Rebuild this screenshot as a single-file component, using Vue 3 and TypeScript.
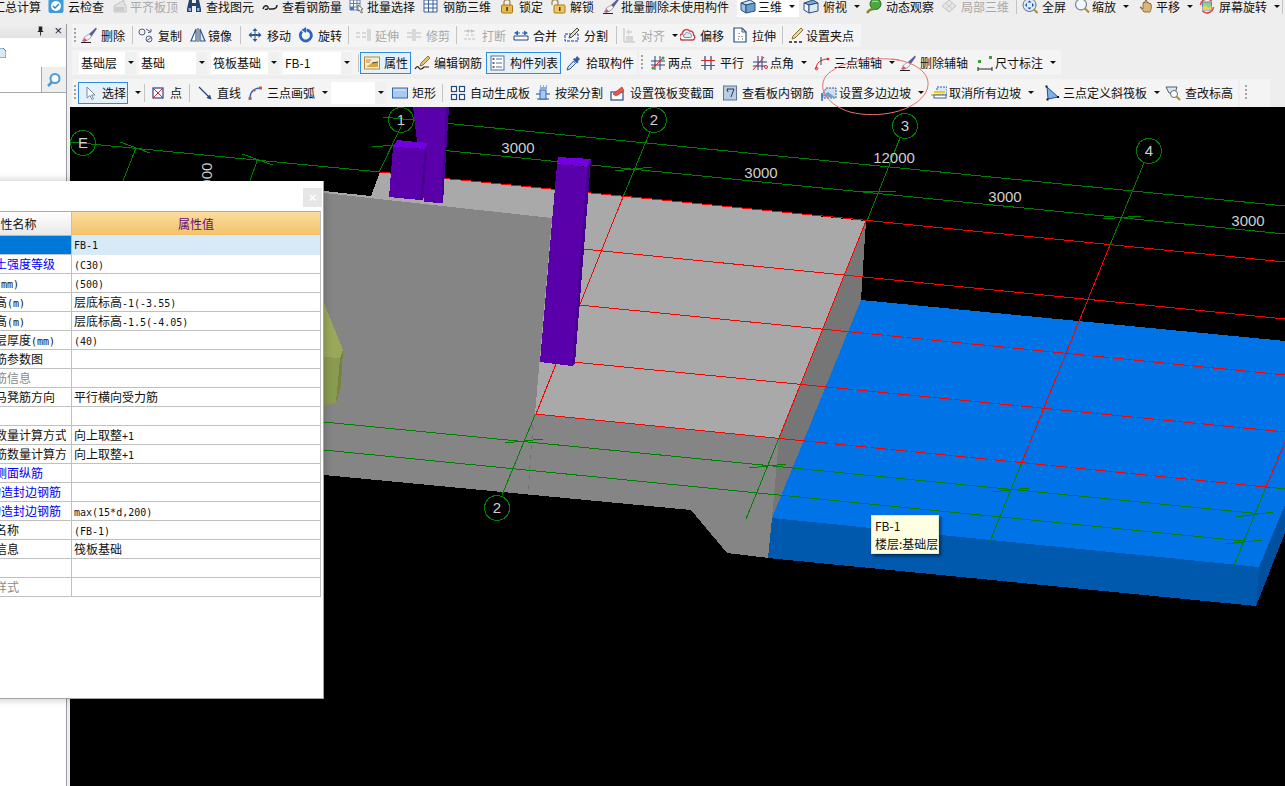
<template>
  <div class="app">
    <div class="row row1">
      <ToolItem v-for="(it, i) in row1" :key="i" :it="it" />
    </div>

    <div class="body">
      <aside class="side">
        <div class="panel">
          <div class="panel-head">
            <svg class="pin" viewBox="0 0 10 10"><path d="M3 0h4v5h1v1H5.500v4h-1V6H2V5h1z" fill="#222" /></svg>
            <span class="panel-x">×</span>
          </div>
          <div class="panel-tools">
            <svg class="doc" viewBox="0 0 6 10"><path d="M-5 0h8l3 3v7H-5z" fill="#dbe8f6" stroke="#4d7fb5" /></svg>
          </div>
          <div class="search">
            <div class="search-input"></div>
            <div class="search-btn">
              <svg viewBox="0 0 16 16" width="16" height="16"><circle cx="9" cy="6.500" r="4.500" fill="#fff" stroke="#4a9bd8" stroke-width="2" /><path d="M6 10l-4 4" stroke="#4a9bd8" stroke-width="2.500" /></svg>
            </div>
          </div>
        </div>
      </aside>

      <div class="work">
        <div class="row row2">
          <div class="group">
            <ToolItem v-for="(it, i) in row2" :key="i" :it="it" />
          </div>
        </div>
        <div class="row row3">
          <div class="group">
            <ToolItem v-for="(it, i) in row3a" :key="i" :it="it" />
          </div>
          <div class="group">
            <ToolItem v-for="(it, i) in row3b" :key="i" :it="it" />
          </div>
        </div>
        <div class="row row4">
          <div class="group">
            <ToolItem v-for="(it, i) in row4" :key="i" :it="it" />
          </div>
          <div class="group endcap"><i class="grip"></i></div>
        </div>

        <div class="canvas">
          <svg class="scene" viewBox="70 107 1215 679" width="1215" height="679" shape-rendering="crispEdges">
            <polygon v-for="(p, i) in faces" :key="'f' + i" :points="p.pts" :fill="p.fill" />
            <line v-for="(l, i) in redLines" :key="'r' + i" :x1="l[0]" :y1="l[1]" :x2="l[2]" :y2="l[3]" stroke="#ff0000" />
            <line x1="533" y1="425" x2="528" y2="493" stroke="#6e6e6e" stroke-dasharray="4 6" />
            <line v-for="(l, i) in greenLines" :key="'g' + i" :x1="l[0]" :y1="l[1]" :x2="l[2]" :y2="l[3]" stroke="#008000" />
            <polygon v-for="(p, i) in columns" :key="'c' + i" :points="p.pts" :fill="p.fill" />
            <circle v-for="a in axes" :key="a.x + a.t" :cx="a.x" :cy="a.y" r="12.500" fill="none" stroke="#008000" />
            <g class="dim" shape-rendering="auto">
              <text v-for="a in axes" :key="'t' + a.x" :x="a.x" :y="a.y + 5" text-anchor="middle">{{ a.t }}</text>
              <text v-for="d in dims" :key="d.x" :x="d.x" :y="d.y" text-anchor="middle">{{ d.t }}</text>
              <text transform="translate(212 196) rotate(-90)">3000</text>
            </g>
          </svg>
        </div>
      </div>
    </div>

    <section class="prop">
      <div class="prop-title"><span class="prop-close">×</span></div>
      <div class="prop-table">
        <div class="prop-head">
          <div class="h-name">属性名称</div>
          <div class="h-val">属性值</div>
        </div>
        <div v-for="(r, i) in rows" :key="i" class="prop-row" :class="{ sel: i === 0 }">
          <div class="c-name" :class="r.tone">
            <div class="c-clip">
              <template v-for="(s, j) in split(r.name)" :key="j"><span :class="{ lat: s.lat }">{{ s.text }}</span></template>
            </div>
          </div>
          <div class="c-val">
            <template v-for="(s, j) in split(r.value)" :key="j"><span :class="{ lat: s.lat }">{{ s.text }}</span></template>
          </div>
        </div>
      </div>
    </section>

    <div class="tip">
      <div>FB-1</div>
      <div>楼层:基础层</div>
    </div>

    <svg class="mark" viewBox="0 0 1285 786" width="1285" height="786">
      <path d="M899 60C870 56 838 62 826 76C816 90 830 106 850 112C878 119 915 112 926 92C934 76 918 62 892 59" fill="none" stroke="#e8706e" stroke-width="1" />
    </svg>
  </div>
</template>

<script setup lang="ts">
import { defineComponent, h } from 'vue'

interface Tool {
  w: number
  kind?: 'sep' | 'grip' | 'sel' | 'pad'
  icon?: string
  label?: string
  caret?: boolean
  off?: boolean
  box?: number
  white?: boolean
  inner?: number
  tight?: boolean
}

const icons: Record<string, string> = {
  cloud: '<rect x="0.500" y="1" width="15" height="14" rx="2" fill="#3d9bdc"/><circle cx="8" cy="8" r="5" fill="#fff"/><path d="M5 8l2 2 4-4" stroke="#2f86c8" stroke-width="1.500" fill="none"/>',
  flush: '<path d="M2 14V8l5-3 5-3v4l2 1v7z" fill="#e2e2e2" stroke="#c4c4c4"/><path d="M3 10h9M3 12h9" stroke="#b4b4b4"/>',
  find: '<path d="M3 2h3v3h4V2h3l2 9v3H10V8H6v6H1v-3z" fill="#27406e"/><rect x="2.500" y="10" width="2.500" height="3" fill="#8cb0e0"/><rect x="11" y="10" width="2.500" height="3" fill="#8cb0e0"/>',
  rebar: '<path d="M1 11c1-4 4-4 5-2s-2 3-3 2M7 11h3c3 0 5-1 5-4" stroke="#222" stroke-width="1.500" fill="none"/>',
  batch: '<path d="M1 2h10v10H1zM1 5.500h10M1 9h10M4.500 2v10M8 2v10" fill="#fff" stroke="#5f7fa8"/><rect x="1" y="9" width="3.500" height="3" fill="#3f78c8"/><path d="M9 7l5 4-2 .5 1.500 3-1.500.5-1.500-3L9 13z" fill="#fff" stroke="#444" stroke-width=".7"/>',
  rebar3d: '<path d="M1 2h13v12H1zM1 6h13M1 10h13M5.500 2v12M10 2v12" fill="#fff" stroke="#3b5f96"/>',
  lock: '<path d="M5 7V4.500a3 3 0 0 1 6 0V7" fill="none" stroke="#9c8a5c" stroke-width="1.300"/><rect x="2.500" y="7" width="11" height="8" rx="1" fill="#e9b94c" stroke="#a87c1c"/><rect x="7.300" y="9" width="1.500" height="4" fill="#4b3a12"/>',
  unlock: '<path d="M2 7V4.500a3 3 0 0 1 6 0V7" fill="none" stroke="#9c8a5c" stroke-width="1.300"/><rect x="4" y="7" width="11" height="8" rx="1" fill="#f0c55a" stroke="#a87c1c"/><rect x="9" y="9" width="1.500" height="4" fill="#4b3a12"/>',
  brush: '<path d="M15 .5L8 7l2.500 2.500L15.800 2z" fill="#5a5f9a"/><path d="M8 7L3.500 10l-2 4 2 .5 5-2.500 2-3z" fill="#f2f2f2" stroke="#777" stroke-width=".6"/><path d="M1.500 14l2-3 3 2.500-3 1z" fill="#d9508f"/><path d="M0 15.500h10" stroke="#222"/>',
  cube: '<path d="M1 5l9-3 5 3-9 2z" fill="#cfe3f4" stroke="#2f4f78"/><path d="M1 5l5 2v8l-5-3z" fill="#9cc2e6" stroke="#2f4f78"/><path d="M6 7l9-2v8l-9 2z" fill="#6d9fd0" stroke="#2f4f78"/>',
  cubetop: '<path d="M1 5l9-3 5 3-9 2z" fill="#7fa9d4" stroke="#2f4f78"/><path d="M1 5l5 2v8l-5-3z" fill="#eef4fa" stroke="#2f4f78"/><path d="M6 7l9-2v8l-9 2z" fill="#dce9f5" stroke="#2f4f78"/>',
  orbit: '<circle cx="9.500" cy="6" r="5.500" fill="#4ba640" stroke="#2c6e28"/><path d="M1 15c2-3 4-4 7-4" stroke="#7d8a3a" stroke-width="2.500" fill="none"/><path d="M6 4c2-1 3-1 6 0" stroke="#b9e6a0" fill="none"/>',
  local: '<path d="M1 8l7-6 7 6-7 6z" fill="#e4e4e4" stroke="#c6c6c6"/><path d="M4.500 5l7 6M11.500 5l-7 6" stroke="#cdcdcd"/>',
  full: '<circle cx="7.500" cy="7" r="6.500" fill="#dbe9f8" stroke="#5a6f92"/><path d="M7.500 2.500l2 2h-4zM7.500 11.500l2-2h-4zM3 7l2-2v4zM12 7l-2-2v4z" fill="#27509a"/><path d="M12 11.500l3.500 3.500" stroke="#b98a2a" stroke-width="2"/>',
  zoom: '<circle cx="7" cy="6.500" r="5.500" fill="#f2f7fc" stroke="#7b8aa0" stroke-width="1.300"/><path d="M11 10.500l4 4" stroke="#b98a2a" stroke-width="2.200"/>',
  hand: '<path d="M2 9c2 0 2 1 3 2V5l1-1 1 1V3l1-1 1 1v2l1-1 1 1v1l1-1 1 1c1 3 0 6-1 8H6c-1-2-3-3-4-5z" fill="#d9b679" stroke="#7a5c2a" stroke-width=".8"/>',
  rotscreen: '<rect x="3.500" y="4" width="9" height="8" fill="#8ed08e" stroke="#5a87b5"/><path d="M3.500 9l3-2 3 3 3-2v4h-9z" fill="#f2d14a"/><path d="M1.500 7a6.500 6.500 0 0 1 11-4M14.500 9a6.500 6.500 0 0 1-11 4" stroke="#e23d3d" stroke-width="1.500" fill="none"/>',
  copy: '<circle cx="4" cy="5" r="3" fill="#eef3f8" stroke="#53627a"/><circle cx="11" cy="12" r="3" fill="#eef3f8" stroke="#53627a"/><path d="M8 2l5 3M13 5v-3M13 5l-3 .5" stroke="#53627a" fill="none"/><path d="M9 13.500l4-3" stroke="#53627a"/>',
  mirror: '<path d="M6 2v12H1z" fill="#fff" stroke="#2f5b9a" stroke-width="1.200"/><path d="M10 2v12h5z" fill="#dfe9f5" stroke="#2f5b9a" stroke-width="1.200"/><path d="M8 1v14" stroke="#444"/>',
  move: '<path d="M8 1l2.500 3h-2v3h3V5l3 3-3 3V9h-3v3h2L8 15l-2.500-3h2V9h-3v2l-3-3 3-3v2h3V4h-2z" fill="#2f5b8f"/>',
  rotate: '<path d="M4 4.500a5.500 5.500 0 1 0 4.500-1.500" fill="none" stroke="#2b63c4" stroke-width="2.800"/><path d="M8 0v6L3.500 3z" fill="#2b63c4"/>',
  extend: '<path d="M1 6h4M1 10h4M7 6h4M7 10h4M13 2v12M15 2v12" stroke="#bdbdbd" fill="none"/>',
  trim: '<path d="M1 6h5M1 10h5M10 6h5M10 10h5M7 2v12M9 2v12" stroke="#bdbdbd" fill="none"/>',
  brk: '<path d="M2 4h12M2 12h12M4 8h3M9 8h3" stroke="#c2c2c2" stroke-dasharray="3 1" fill="none"/><path d="M7 6l-3-2 3-2zM9 6l3-2-3-2z" fill="#c2c2c2"/>',
  merge: '<path d="M1 9h14v4H1z" fill="#fff" stroke="#20497e"/><path d="M1 6l4-2.500v5zM15 6l-4-2.500v5z" fill="#2b63c4"/><path d="M5 6h2M9 6h2" stroke="#2b63c4"/>',
  split: '<rect x="1" y="7" width="13" height="7" fill="none" stroke="#1433d6" stroke-dasharray="3 1"/><path d="M13 1l2 2-7 7-3 1 1-3z" fill="#e5dcc6" stroke="#444"/>',
  align: '<path d="M1 1v14h11" fill="none" stroke="#bdbdbd"/><path d="M3 5l3-3v2h3v2H6v2zM3 9h7v5H3z" fill="#d6d6d6"/>',
  offset: '<path d="M3 13a3 3 0 0 1-.5-6 4 4 0 0 1 7-3 3.500 3.500 0 0 1 4 4 2.800 2.800 0 0 1-.5 5z" fill="#fff" stroke="#c64a4a" stroke-width="1.500"/><path d="M5 10.500a1.500 1.500 0 0 1 0-3 2 2 0 0 1 3.500-1.500c2-.5 3 1 2.500 2 1 0 1 2.500-.5 2.500z" fill="#dfe7f2" stroke="#7a8fa8"/>',
  stretch: '<path d="M2 1h8l4 4v10H2z" fill="#fff" stroke="#1f4e86" stroke-width="1.200"/><path d="M10 1v4h4M7 6v1M7 9v1M10 9v1M10 12h1M6 12h1" stroke="#555" fill="none"/>',
  grips: '<path d="M1 15h3M6 15h3M11 15h3" stroke="#222" stroke-width="1.300"/><path d="M13 1l2 2-8 8-3 1 1-3z" fill="#e8d9a8" stroke="#8a6d2a"/>',
  attr: '<rect x="0.500" y="2" width="15" height="12" fill="#f8eccf" stroke="#b08c3c"/><path d="M2 5h5M2 7h4" stroke="#c9843a"/><path d="M2 12l6-4 6-1v5z" fill="#d8a63f"/><path d="M8 8l6-1" stroke="#444"/>',
  edit: '<path d="M1 14c2-3 3-3 4-1s3 1 5-1h5" fill="none" stroke="#222" stroke-width="1.200"/><path d="M14 1l2 2-7 7-3 1 1-3z" fill="#f0c060" stroke="#7a5c2a" stroke-width=".8"/>',
  list: '<rect x="1" y="1" width="13" height="14" fill="#fff" stroke="#58708f"/><path d="M6 4h6M6 8h6M6 12h6" stroke="#58708f"/><rect x="2.500" y="3" width="2" height="2" fill="#58708f"/><rect x="2.500" y="7" width="2" height="2" fill="#58708f"/><rect x="2.500" y="11" width="2" height="2" fill="#58708f"/>',
  dropper: '<path d="M11 1l3 3-2 2 .5 1-1.500 1.500L7 4.500 8.500 3l1 .5z" fill="#2f5b9a"/><path d="M7.500 6L2 12l-1 3 3-1 5.500-5.500z" fill="#cfe3f5" stroke="#2f5b9a"/>',
  twopt: '<path d="M5 1v14M10 1v14M1 6h14M1 10h14" stroke="#2d3f7a" fill="none"/><path d="M2 14L14 2" stroke="#d22"/><circle cx="3" cy="13" r="1.500" fill="#3a9a3a"/><circle cx="13" cy="3" r="1.500" fill="#3a9a3a"/>',
  parallel: '<path d="M5 1v14M11 1v14" stroke="#2d3f7a" fill="none" stroke-width="1.200"/><path d="M1 5.500h14M1 10.500h14" stroke="#d22" stroke-width="1.200"/>',
  angle: '<path d="M6 1v14M10 1v14M1 7h14M1 11h12" stroke="#2d3f7a" fill="none"/><path d="M1 15L12 2" stroke="#d22"/><circle cx="14" cy="12" r="1.500" fill="none" stroke="#d22"/>',
  arc3: '<path d="M2 14c0-6 5-10 12-10" fill="none" stroke="#d22"/><path d="M7 2v8" stroke="#2d3f7a"/><circle cx="2.500" cy="13.500" r="1.300" fill="none" stroke="#d22"/><circle cx="14" cy="4" r="1.300" fill="#d22"/>',
  dim: '<path d="M1 14h14M1 12v4M15 12v4" stroke="#222" fill="none"/><rect x="1" y="5" width="3" height="3" fill="#3aa03a"/><rect x="12" y="1" width="3" height="3" fill="#3aa03a"/>',
  cursor: '<path d="M5 2v11l3-2.500 2 4 1.500-.8-2-3.700h3.500z" fill="#fff" stroke="#7b8aa5"/>',
  pointx: '<rect x="3" y="3" width="10" height="10" fill="#fff" stroke="#2d3f8a" stroke-width="1.200"/><path d="M4 4l8 8M12 4l-8 8" stroke="#d22"/>',
  line: '<path d="M2 2l11 11" stroke="#20497e" stroke-width="1.300"/><path d="M14.500 14.500l-5-1.500 3.500-3.500z" fill="#20497e"/>',
  arc: '<path d="M3 13c0-6 4-10 10-10" fill="none" stroke="#2b63c4" stroke-width="1.300"/><rect x="1.500" y="12" width="3" height="3" fill="#d2553f"/><rect x="6" y="4" width="2.500" height="2.500" fill="#d2553f"/><rect x="12" y="1.500" width="3" height="3" fill="#d2553f"/>',
  rect: '<rect x="0.500" y="3" width="15" height="10" fill="#a9c9ee" stroke="#3468b0"/><path d="M2 5h12" stroke="#dfeaf8"/>',
  auto: '<g fill="#fff" stroke="#20497e" stroke-width="1.200"><rect x="1.500" y="1.500" width="5" height="5"/><rect x="9.500" y="1.500" width="5" height="5"/><rect x="1.500" y="9.500" width="5" height="5"/><rect x="9.500" y="9.500" width="5" height="5"/></g>',
  beam: '<path d="M1 9h14M2 14h12" stroke="#20497e"/><rect x="5" y="5" width="6" height="9" fill="#a9c9ee" stroke="#2b63c4"/><path d="M5 1h1M8 1h1M11 1h1M5 3h7" stroke="#2b63c4"/>',
  slope: '<rect x="1" y="7" width="12" height="8" fill="#fff" stroke="#1f4e96" stroke-width="1.200"/><path d="M3 9l9-7 2 4-8 5z" fill="#e9584a" stroke="#b8332a" stroke-width=".7"/>',
  check: '<rect x="1.500" y="1" width="13" height="14" fill="#b9cde2" stroke="#5f7890"/><path d="M5 4h7l-3 8M5 4l1 3" stroke="#2a3a50" fill="none"/>',
  multi: '<path d="M1 11L5 3h10v10H3z" fill="#cfe0f2" stroke="#2f5b9a" stroke-dasharray="2 1"/><path d="M1 8v8" stroke="#2b63c4" stroke-width="1.500"/><path d="M1 11L7 7l8 6z" fill="#6d9fd6"/>',
  cancel: '<rect x="6" y="2" width="10" height="8" fill="#dce9f5" stroke="#33619e" stroke-dasharray="2 1"/><path d="M0 10h10M3 7h11" stroke="#e8c838" stroke-width="2"/><rect x="3" y="10" width="12" height="3" fill="#fff" stroke="#33619e"/>',
  tri: '<path d="M2 2l11 10-10 2z" fill="#7fb0e6" stroke="#1f4e96"/><rect x="0.500" y="0.500" width="2" height="2" fill="#111"/><rect x="12" y="11" width="2" height="2" fill="#111"/><rect x="1.500" y="13.500" width="2" height="2" fill="#111"/>',
  elev: '<path d="M1 2h11l-2 6H4z" fill="#dce9f5" stroke="#4a5e7a"/><circle cx="9" cy="9" r="3.500" fill="#fff" stroke="#6a6a6a"/><path d="M11.500 11.500l3.500 3.500" stroke="#b98a2a" stroke-width="2"/>'
}

// widths are the distance to the next tool, so each row stays in flow
const row1: Tool[] = [
  { w: 55, label: '汇总计算' },
  { w: 64, icon: 'cloud', label: '云检查' },
  { w: 74, icon: 'flush', label: '平齐板顶', off: true, tight: true },
  { w: 76, icon: 'find', label: '查找图元' },
  { w: 87, icon: 'rebar', label: '查看钢筋量' },
  { w: 74, icon: 'batch', label: '批量选择', tight: true },
  { w: 76, icon: 'rebar3d', label: '钢筋三维' },
  { w: 51, icon: 'lock', label: '锁定' },
  { w: 53, icon: 'unlock', label: '解锁' },
  { w: 134, icon: 'brush', label: '批量删除未使用构件', tight: true },
  { w: 62, icon: 'cube', label: '三维', caret: true, white: true, tight: true },
  { w: 63, icon: 'cubetop', label: '俯视', caret: true },
  { w: 75, icon: 'orbit', label: '动态观察' },
  { w: 75, icon: 'local', label: '局部三维', off: true },
  { w: 6, kind: 'sep' },
  { w: 52, icon: 'full', label: '全屏' },
  { w: 64, icon: 'zoom', label: '缩放', caret: true, tight: true },
  { w: 61, icon: 'hand', label: '平移', caret: true, tight: true },
  { w: 83, icon: 'rotscreen', label: '屏幕旋转', caret: true },
  { w: 4, kind: 'sep' }
]

const row2: Tool[] = [
  { w: 9, kind: 'grip' },
  { w: 51, icon: 'brush', label: '删除' },
  { w: 6, kind: 'sep' },
  { w: 52, icon: 'copy', label: '复制' },
  { w: 50, icon: 'mirror', label: '镜像', tight: true },
  { w: 7, kind: 'sep' },
  { w: 51, icon: 'move', label: '移动' },
  { w: 50, icon: 'rotate', label: '旋转' },
  { w: 7, kind: 'sep' },
  { w: 51, icon: 'extend', label: '延伸', off: true },
  { w: 50, icon: 'trim', label: '修剪', off: true },
  { w: 6, kind: 'sep' },
  { w: 51, icon: 'brk', label: '打断', off: true },
  { w: 51, icon: 'merge', label: '合并' },
  { w: 52, icon: 'split', label: '分割' },
  { w: 7, kind: 'sep' },
  { w: 57, icon: 'align', label: '对齐', off: true, caret: true, tight: true },
  { w: 52, icon: 'offset', label: '偏移' },
  { w: 50, icon: 'stretch', label: '拉伸' },
  { w: 6, kind: 'sep' },
  { w: 73, icon: 'grips', label: '设置夹点', tight: true }
]

const row3a: Tool[] = [
  { w: 7, kind: 'pad' },
  { w: 60, kind: 'sel', inner: 57, label: '基础层' },
  { w: 72, kind: 'sel', inner: 68, label: '基础' },
  { w: 72, kind: 'sel', inner: 68, label: '筏板基础' },
  { w: 75, kind: 'sel', inner: 69, label: 'FB-1' },
  { w: 2, kind: 'sep' },
  { w: 54, icon: 'attr', label: '属性', box: 51 },
  { w: 72, icon: 'edit', label: '编辑钢筋' },
  { w: 80, icon: 'list', label: '构件列表', box: 75 },
  { w: 71, icon: 'dropper', label: '拾取构件' }
]

const row3b: Tool[] = [
  { w: 11, kind: 'grip' },
  { w: 50, icon: 'twopt', label: '两点', tight: true },
  { w: 52, icon: 'parallel', label: '平行' },
  { w: 62, icon: 'angle', label: '点角', caret: true, tight: true },
  { w: 86, icon: 'arc3', label: '三点辅轴', caret: true },
  { w: 77, icon: 'brush', label: '删除辅轴' },
  { w: 84, icon: 'dim', label: '尺寸标注', caret: true, tight: true }
]

const row4: Tool[] = [
  { w: 6, kind: 'grip' },
  { w: 66, icon: 'cursor', label: '选择', box: 50, caret: true },
  { w: 6, kind: 'sep' },
  { w: 39, icon: 'pointx', label: '点' },
  { w: 8, kind: 'sep' },
  { w: 50, icon: 'line', label: '直线' },
  { w: 84, icon: 'arc', label: '三点画弧', caret: true },
  { w: 61, kind: 'sel', inner: 55, label: '' },
  { w: 50, icon: 'rect', label: '矩形' },
  { w: 8, kind: 'sep' },
  { w: 85, icon: 'auto', label: '自动生成板' },
  { w: 75, icon: 'beam', label: '按梁分割' },
  { w: 112, icon: 'slope', label: '设置筏板变截面' },
  { w: 99, icon: 'check', label: '查看板内钢筋' },
  { w: 110, icon: 'multi', label: '设置多边边坡', caret: true, tight: true },
  { w: 114, icon: 'cancel', label: '取消所有边坡', caret: true, tight: true },
  { w: 120, icon: 'tri', label: '三点定义斜筏板', caret: true, tight: true },
  { w: 73, icon: 'elev', label: '查改标高' }
]

const ToolItem = defineComponent({
  props: { it: { type: Object as () => Tool, required: true } },
  setup(props) {
    return () => {
      const it = props.it
      const itemStyle = { width: it.w + 'px' }
      if (it.kind === 'pad') return h('div', { class: 'item', style: itemStyle })
      if (it.kind === 'sep') return h('div', { class: 'item', style: itemStyle }, [h('i', { class: 'sep' })])
      if (it.kind === 'grip') return h('div', { class: 'item', style: itemStyle }, [h('i', { class: 'grip' })])
      if (it.kind === 'sel') {
        return h('div', { class: 'item', style: itemStyle }, [
          h('div', { class: 'sel', style: { width: it.inner + 'px' } }, [
            h('span', { class: 'sel-text' }, it.label),
            h('span', { class: 'sel-btn' }, [h('i', { class: 'caret' })])
          ])
        ])
      }
      const kids = [h('span', it.label)]
      if (it.icon) kids.unshift(h('svg', { class: 'ico', viewBox: '0 0 16 16', innerHTML: icons[it.icon] }))
      const face = h(
        'div',
        { class: ['face', { boxed: !!it.box, tight: it.tight }], style: it.box ? { width: it.box + 'px' } : undefined },
        kids
      )
      return h('div', { class: ['item', { off: it.off, white: it.white }], style: itemStyle }, it.caret ? [face, h('i', { class: 'caret' })] : [face])
    }
  }
})

const faces = [
  { fill: '#a9a9a9', pts: '324,191 371,196 380,172 866,221 779,438 535,414 552,218 324,193' },
  { fill: '#858585', pts: '324,193 552,218 535,414 779,438 773,518 769,558 727,553 691,510 324,475' },
  { fill: '#767676', pts: '866,221 861,300 772,518 779,438' },
  { fill: '#0073e6', pts: '861,300 1285,341 1285,505 1259,567 772,518' },
  { fill: '#0059ad', pts: '772,518 1259,567 1256,606 768,558' },
  { fill: '#00509f', pts: '1259,567 1285,505 1285,533 1256,606' },
  { fill: '#9aa85c', pts: '324,303 343,350 340,358 324,357' },
  { fill: '#8a9a50', pts: '324,357 340,358 336,403 324,405' },
  { fill: '#76843f', pts: '340,358 343,350 341,385 336,403' }
]

const columns = [
  { fill: '#5a00aa', pts: '413,107 446,107 441,203 424,202' },
  { fill: '#4a008f', pts: '446,107 449,107 443,203 441,203' },
  { fill: '#7000e0', pts: '397,140 428,143 427,149 393,147' },
  { fill: '#5a00aa', pts: '393,147 425,149 420,200 389,197' },
  { fill: '#4a008f', pts: '425,149 428,143 423,200 420,200' },
  { fill: '#7000e0', pts: '558,157 591,159 589,167 557,164' },
  { fill: '#5a00aa', pts: '557,164 587,167 572,366 540,362' },
  { fill: '#4a008f', pts: '587,167 591,159 575,363 572,366' }
]

const redLines = [
  [380, 172, 1285, 262],
  [583, 249, 1285, 319],
  [579, 305, 1285, 375],
  [573, 362, 1285, 432],
  [535, 414, 1266, 487],
  [623, 197, 536, 414],
  [866, 221, 779, 438],
  [1110, 245, 1022, 462],
  [1285, 442, 1266, 487]
]

const greenLines = [
  [70, 142, 380, 172],
  [383, 117, 1285, 206],
  [400, 146, 1285, 234],
  [372, 147, 395, 145],
  [324, 422, 1262, 514],
  [324, 450, 1243, 541],
  [1266, 487, 1285, 489],
  [402, 125, 379, 172],
  [650, 132, 623, 197],
  [900, 138, 867, 221],
  [1144, 163, 1110, 245],
  [535, 415, 502, 495],
  [779, 438, 746, 519],
  [1022, 462, 989, 544],
  [1266, 487, 1233, 568],
  [120, 142, 150, 153],
  [242, 154, 273, 165],
  [136, 148, 123, 181],
  [257, 161, 250, 181],
  [615, 171, 652, 167],
  [860, 192, 897, 191],
  [1103, 219, 1141, 216],
  [505, 443, 543, 439],
  [749, 468, 786, 464],
  [992, 492, 1029, 488],
  [1236, 517, 1273, 512],
  [1225, 544, 1262, 540]
]

const axes = [
  { t: 'E', x: 83, y: 143 },
  { t: '1', x: 401, y: 120 },
  { t: '2', x: 654, y: 120 },
  { t: '3', x: 905, y: 126 },
  { t: '4', x: 1149, y: 151 },
  { t: '2', x: 497, y: 508 }
]

const dims = [
  { t: '3000', x: 518, y: 153 },
  { t: '3000', x: 761, y: 178 },
  { t: '12000', x: 894, y: 163 },
  { t: '3000', x: 1005, y: 202 },
  { t: '3000', x: 1248, y: 226 }
]

const rows = [
  { name: '名称', value: 'FB-1' },
  { name: '混凝土强度等级', value: '(C30)', tone: 'blue' },
  { name: '厚度(mm)', value: '(500)' },
  { name: '顶标高(m)', value: '层底标高-1(-3.55)' },
  { name: '底标高(m)', value: '层底标高-1.5(-4.05)' },
  { name: '保护层厚度(mm)', value: '(40)' },
  { name: '马凳筋参数图', value: '' },
  { name: '马凳筋信息', value: '', tone: 'gray' },
  { name: '线形马凳筋方向', value: '平行横向受力筋' },
  { name: '拉筋', value: '' },
  { name: '拉筋数量计算方式', value: '向上取整+1' },
  { name: '马凳筋数量计算方式', value: '向上取整+1' },
  { name: '筏板侧面纵筋', value: '', tone: 'blue' },
  { name: 'U形构造封边钢筋', value: '', tone: 'blue' },
  { name: 'U形构造封边钢筋', value: 'max(15*d,200)', tone: 'blue' },
  { name: '归类名称', value: '(FB-1)' },
  { name: '汇总信息', value: '筏板基础' },
  { name: '备注', value: '' },
  { name: '显示样式', value: '', tone: 'gray' }
]

// the table's latin text is half the width of the CJK cells
function split(text: string) {
  const parts = text.match(/[\u0000-\u00ff]+|[^\u0000-\u00ff]+/g) || []
  return parts.map((p) => ({ text: p, lat: p.charCodeAt(0) < 256 }))
}
</script>

<style scoped>
.app {
  position: relative;
  width: 1285px;
  height: 786px;
  overflow: hidden;
  background: #eeeeee;
  font-family: "Noto Sans CJK SC", "Liberation Sans", sans-serif;
  font-size: 12px;
  color: #111;
  display: flex;
  flex-direction: column;
}
.row {
  display: flex;
  flex: none;
}
.row1 {
  height: 26px;
  margin: -2px 0 0 -7px;
  align-items: flex-start;
}
.row1 :deep(.item) {
  height: 16px;
}
.row1 :deep(.item.white) {
  height: 19px;
  padding: 0 0 3px 3px;
  margin-right: 4px;
  background: #fff;
  box-sizing: border-box;
}
.row1 :deep(.sep) {
  height: 16px;
}
.body {
  flex: 1;
  display: flex;
  min-height: 0;
}
.side {
  flex: none;
  width: 70px;
}
.panel {
  width: 66px;
  height: 100%;
  background: #fff;
  border-right: 1px solid #9a9aa2;
}
.panel-head {
  height: 14px;
  background: linear-gradient(#eeeeee, #e2e2e2);
  display: flex;
  align-items: center;
  justify-content: flex-end;
  gap: 9px;
  padding-right: 4px;
}
.pin {
  width: 9px;
  height: 10px;
}
.panel-x {
  font: 13px/14px "Liberation Sans", sans-serif;
  color: #222;
}
.panel-tools {
  height: 29px;
  display: flex;
  align-items: center;
}
.doc {
  width: 6px;
  height: 10px;
}
.search {
  height: 25px;
  display: flex;
  border-bottom: 1px solid #a8a8a8;
}
.search-input {
  width: 41px;
  background: #fff;
  border-right: 1px solid #a8a8a8;
}
.search-btn {
  flex: 1;
  background: #eeeeee;
  display: flex;
  align-items: center;
  justify-content: center;
}
.work {
  flex: 1;
  min-width: 0;
  display: flex;
  flex-direction: column;
}
.row2 {
  height: 23px;
  padding-left: 2px;
}
.row2 .group,
.row4 .group {
  padding-bottom: 1px;
  box-sizing: border-box;
}
.row3 {
  height: 25px;
  margin-top: 3px;
  padding-left: 2px;
  gap: 2px;
}
.row4 {
  height: 28px;
  margin-top: 4px;
  padding-left: 2px;
  gap: 2px;
}
.group {
  display: flex;
  align-items: center;
  background: #f4f4f4;
}
.endcap {
  width: 30px;
  padding-left: 3px;
  box-sizing: border-box;
}
:deep(.item) {
  flex: none;
  display: flex;
  align-items: center;
  white-space: nowrap;
}
:deep(.item.off) {
  color: #a8a8a8;
}
:deep(.face) {
  display: flex;
  align-items: center;
  gap: 4px;
  flex: none;
}
:deep(.face.tight) {
  gap: 2px;
}
:deep(.face.boxed) {
  height: 22px;
  box-sizing: border-box;
  padding-left: 3px;
  border: 1px solid #2e8ce0;
  background: #e4f0fa;
}
:deep(.ico) {
  width: 16px;
  height: 16px;
  flex: none;
}
:deep(.caret) {
  display: block;
  flex: none;
  margin-left: 7px;
  border: 3px solid transparent;
  border-top: 3px solid #111;
  border-bottom: 0;
}
:deep(.sep) {
  display: block;
  width: 1px;
  height: 18px;
  background: #c4c4c4;
}
.grip,
:deep(.grip) {
  display: block;
  width: 2px;
  height: 15px;
  margin-left: 2px;
  background: repeating-linear-gradient(#a4a4a4 0 2px, transparent 2px 4px);
}
:deep(.sel) {
  height: 22px;
  display: flex;
  align-items: center;
  justify-content: space-between;
  background: #fff;
}
:deep(.sel-text) {
  padding-left: 2px;
}
:deep(.sel-btn) {
  width: 11px;
  height: 100%;
  background: #f0f0f0;
  display: flex;
  align-items: center;
}
:deep(.sel-btn .caret) {
  margin-left: 3px;
}
.canvas {
  flex: 1;
  background: #000;
  min-height: 0;
  overflow: hidden;
}
.scene {
  display: block;
}
.dim text {
  font: 15px "Liberation Sans", sans-serif;
  fill: #cfcfcf;
}
.prop {
  position: absolute;
  left: -47px;
  top: 181px;
  width: 371px;
  height: 518px;
  box-sizing: border-box;
  background: #fff;
  border: 1px solid #a4a4a8;
  border-top: 0;
  box-shadow: 0 0 8px rgba(0, 0, 0, 0.25);
}
.prop-title {
  height: 30px;
  display: flex;
  justify-content: flex-end;
  padding: 7px 1px 0 0;
  box-sizing: border-box;
}
.prop-close {
  width: 19px;
  height: 19px;
  background: #e6e6e6;
  color: #fff;
  font: bold 13px/19px "Liberation Sans", sans-serif;
  text-align: center;
}
.prop-table {
  width: 367px;
  border-top: 1px solid #a9a9b0;
  border-right: 1px solid #c0c0c0;
  box-sizing: border-box;
}
.prop-head {
  display: flex;
  height: 24px;
  line-height: 24px;
  text-align: center;
  border-bottom: 1px solid #b8b8b8;
  box-sizing: border-box;
}
.h-name {
  width: 118px;
  background: linear-gradient(#ffffff, #e8e8e8);
  border-right: 1px solid #c0c0c0;
  box-sizing: border-box;
}
.h-val {
  flex: 1;
  color: #660a80;
  background: linear-gradient(#fbdc9f, #f2c26a);
}
.prop-row {
  display: flex;
  height: 19px;
  line-height: 18px;
  box-sizing: border-box;
  border-bottom: 1px solid #c0c0c0;
}
.c-name {
  width: 118px;
  padding-left: 17px;
  box-sizing: border-box;
  border-right: 1px solid #c0c0c0;
}
.c-clip {
  width: 95px;
  overflow: hidden;
  white-space: nowrap;
}
.c-val {
  flex: 1;
  padding-left: 2px;
  white-space: nowrap;
}
.blue {
  color: #0000ee;
}
.gray {
  color: #8a8a8a;
}
.sel .c-name {
  background: #0078d7;
  color: #0078d7;
}
.sel .c-val {
  background: #d8e9f8;
}
.lat {
  font-family: "DejaVu Sans Mono", monospace;
  font-size: 10px;
}
.tip {
  position: absolute;
  left: 871px;
  top: 515px;
  width: 68px;
  height: 39px;
  box-sizing: border-box;
  padding: 1px 0 0 3px;
  line-height: 18px;
  background: #ffffe1;
  border: 1px solid #e8e8d0;
  box-shadow: 2px 2px 3px rgba(0, 0, 0, 0.5);
  white-space: nowrap;
}
.mark {
  position: absolute;
  left: 0;
  top: 0;
  pointer-events: none;
}
</style>

<style>
html,
body {
  margin: 0;
  background: #000;
}
</style>
